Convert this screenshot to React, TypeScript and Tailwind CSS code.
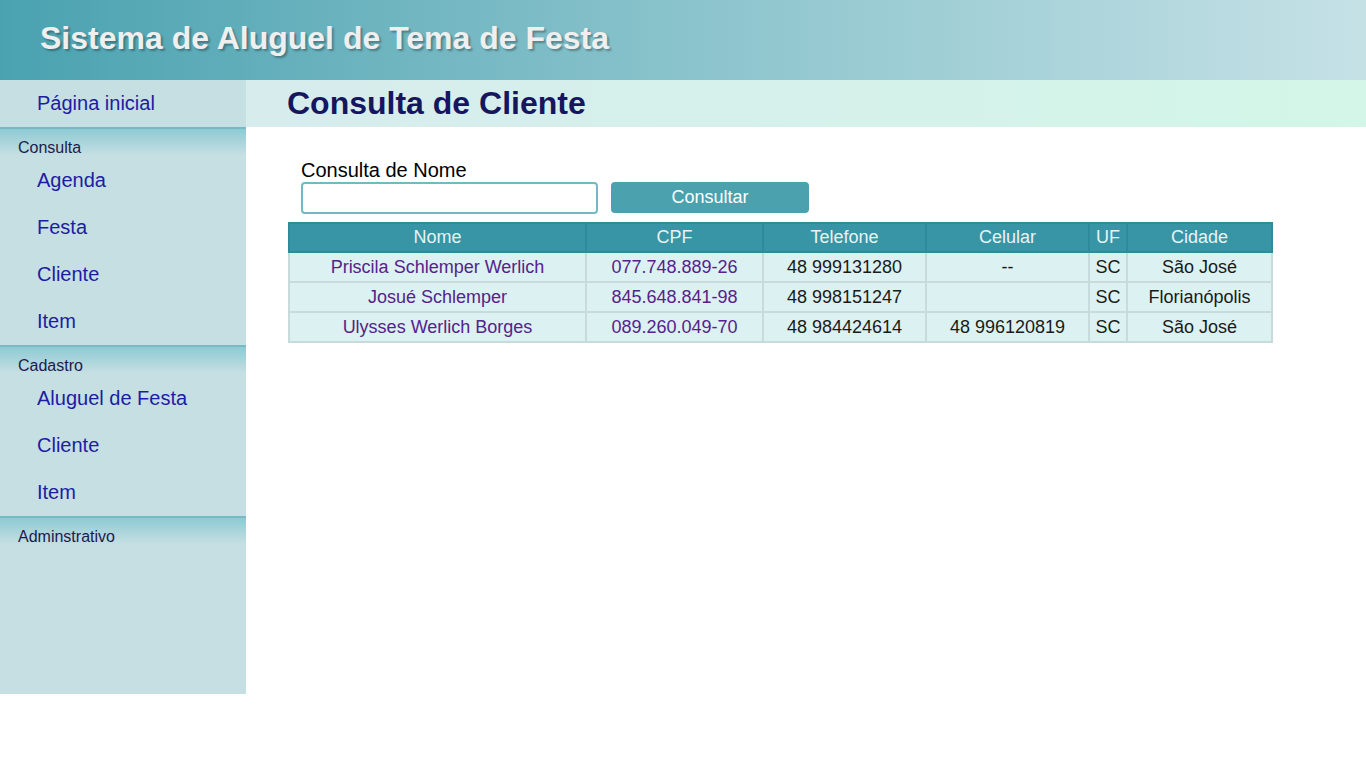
import React from 'react';

const consultaLinks = ['Agenda', 'Festa', 'Cliente', 'Item'];
const cadastroLinks = ['Aluguel de Festa', 'Cliente', 'Item'];

const clientes = [
  { nome: 'Priscila Schlemper Werlich', cpf: '077.748.889-26', telefone: '48 999131280', celular: '--', uf: 'SC', cidade: 'São José' },
  { nome: 'Josué Schlemper', cpf: '845.648.841-98', telefone: '48 998151247', celular: '', uf: 'SC', cidade: 'Florianópolis' },
  { nome: 'Ulysses Werlich Borges', cpf: '089.260.049-70', telefone: '48 984424614', celular: '48 996120819', uf: 'SC', cidade: 'São José' },
];

const colunas = [
  { label: 'Nome', width: 297 },
  { label: 'CPF', width: 177 },
  { label: 'Telefone', width: 163 },
  { label: 'Celular', width: 163 },
  { label: 'UF', width: 38 },
  { label: 'Cidade', width: 145 },
];

function MenuSection({ title, links }: { title: string; links: string[] }) {
  return (
    <div className="border-t-2 border-[#78b9c3] bg-[linear-gradient(to_bottom,#8ecad3,#c5dfe3_26px)]">
      <div className="pl-[18px] pt-[10px] text-[16px] leading-[18px] text-[#1b1b4d]">{title}</div>
      {links.map((link) => (
        <a key={title + link} href="#" className="flex h-[47px] items-center pb-[2px] pl-[37px] text-[20px] text-[#1d1ca4]">
          {link}
        </a>
      ))}
    </div>
  );
}

export default function App() {
  return (
    <div className="min-h-screen bg-white font-['Liberation_Sans',Arial,sans-serif]">
      <header className="h-20 bg-[linear-gradient(to_right,#4aa2b0,#8ac3cc_50%,#c5e1e6)] pl-10 pt-[20px]">
        <h1 className="text-[32px] font-bold leading-[1.15] text-[#efefef] [text-shadow:2px_2px_2px_rgba(0,0,0,0.3)]">
          Sistema de Aluguel de Tema de Festa
        </h1>
      </header>

      <div className="flex">
        <nav className="h-[614px] w-[246px] shrink-0 bg-[#c5dfe3]">
          <a href="#" className="flex h-[47px] items-center pb-[2px] pl-[37px] text-[20px] text-[#1d1ca4]">
            Página inicial
          </a>
          <MenuSection title="Consulta" links={consultaLinks} />
          <MenuSection title="Cadastro" links={cadastroLinks} />
          <MenuSection title="Adminstrativo" links={[]} />
        </nav>

        <main className="flex-1">
          <div className="h-[47px] bg-[linear-gradient(to_right,#d7eced,#d3f6e8)] pl-[41px] pt-[5px]">
            <h2 className="text-[32px] font-bold leading-[1.15] text-[#16165f]">Consulta de Cliente</h2>
          </div>

          <div className="pl-[42px] pt-[32px]">
            <div className="ml-[13px]">
              <label className="block text-[20px] leading-[23px] text-black">Consulta de Nome</label>
              <div className="flex items-start gap-[13px]">
                <input type="text" className="h-8 w-[297px] rounded-[4px] border-2 border-[#72b9c4] bg-white px-2 outline-none" />
                <button className="h-[31px] w-[198px] rounded-[4px] bg-[#4ba1ae] text-[18px] text-white">Consultar</button>
              </div>
            </div>

            <table className="mt-2 w-[983px] table-fixed border-collapse text-[18px]">
              <colgroup>
                {colunas.map((c) => (
                  <col key={c.label} style={{ width: c.width }} />
                ))}
              </colgroup>
              <thead>
                <tr>
                  {colunas.map((c) => (
                    <th key={c.label} className="h-[29px] border-2 border-[#2f8a99] bg-[#3795a5] p-0 font-normal text-[#e8f3f3]">
                      {c.label}
                    </th>
                  ))}
                </tr>
              </thead>
              <tbody>
                {clientes.map((c) => (
                  <tr key={c.cpf}>
                    <td className="h-[30px] border-2 border-[#c7dbdb] bg-[#dcf1f1] p-0 text-center text-[#55238a]">{c.nome}</td>
                    <td className="border-2 border-[#c7dbdb] bg-[#dcf1f1] p-0 text-center text-[#55238a]">{c.cpf}</td>
                    <td className="border-2 border-[#c7dbdb] bg-[#dcf1f1] p-0 text-center text-[#1a1a1a]">{c.telefone}</td>
                    <td className="border-2 border-[#c7dbdb] bg-[#dcf1f1] p-0 text-center text-[#1a1a1a]">{c.celular}</td>
                    <td className="border-2 border-[#c7dbdb] bg-[#dcf1f1] p-0 text-center text-[#1a1a1a]">{c.uf}</td>
                    <td className="border-2 border-[#c7dbdb] bg-[#dcf1f1] p-0 text-center text-[#1a1a1a]">{c.cidade}</td>
                  </tr>
                ))}
              </tbody>
            </table>
          </div>
        </main>
      </div>
    </div>
  );
}
